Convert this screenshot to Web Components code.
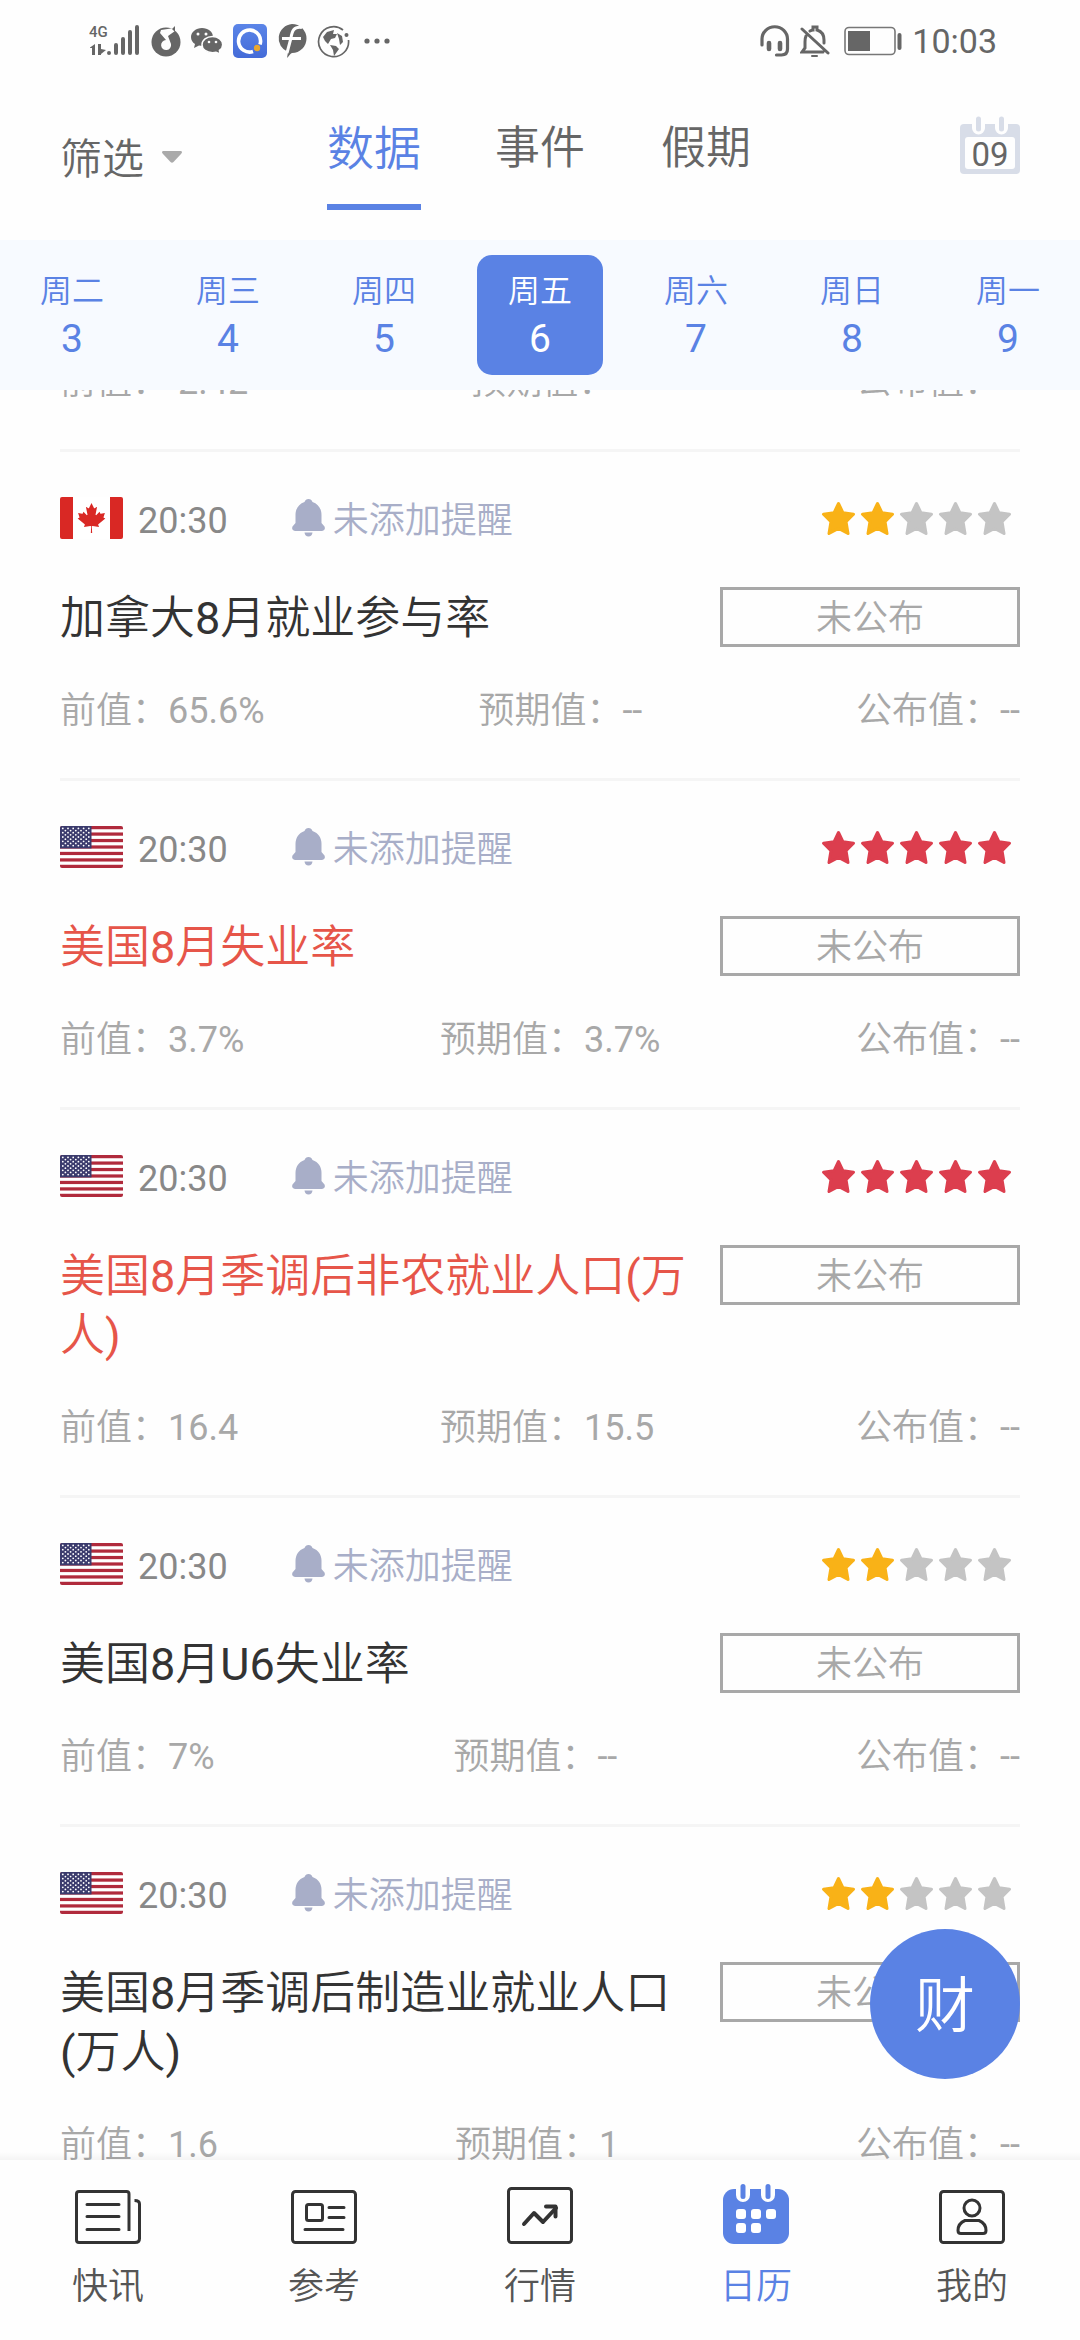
<!DOCTYPE html>
<html lang="zh-CN">
<head>
<meta charset="utf-8">
<meta name="viewport" content="width=device-width, initial-scale=1">
<title>财经日历</title>
<style>
  html, body { margin: 0; height: 100%; }
  body {
    font-family: Roboto, "Noto Sans CJK SC DemiLight", "Noto Sans CJK SC Light", "Noto Sans CJK SC", sans-serif;
    background: #fefefe;
    color: #333;
    --blue: #5a82e4;
    --muted: #a8a8a8;
  }
</style>
</head>
<body>
<calendar-app>
  <status-bar slot="status" time="10:03"></status-bar>
  <app-header slot="header" day="09"></app-header>
  <date-strip slot="dates" selected="6"></date-strip>
  <value-row previous="-2.42" forecast="--" actual="--" class="scrolled"></value-row>
  <event-card flag="ca" time="20:30" stars="2" previous="65.6%" forecast="--" actual="--">加拿大8月就业参与率</event-card>
  <event-card flag="us" time="20:30" stars="5" important previous="3.7%" forecast="3.7%" actual="--">美国8月失业率</event-card>
  <event-card flag="us" time="20:30" stars="5" important previous="16.4" forecast="15.5" actual="--">美国8月季调后非农就业人口(万人)</event-card>
  <event-card flag="us" time="20:30" stars="2" previous="7%" forecast="--" actual="--">美国8月U6失业率</event-card>
  <event-card flag="us" time="20:30" stars="2" previous="1.6" forecast="1" actual="--">美国8月季调后制造业就业人口(万人)</event-card>
  <float-button slot="float">财</float-button>
  <tab-bar slot="nav">
    <tab-item icon="news">快讯</tab-item>
    <tab-item icon="reference">参考</tab-item>
    <tab-item icon="market">行情</tab-item>
    <tab-item icon="calendar" active>日历</tab-item>
    <tab-item icon="profile">我的</tab-item>
  </tab-bar>
</calendar-app>

<script>
const BASE = `
  :host, *, *::before { box-sizing: border-box; }
  button { font: inherit; color: inherit; background: none; border: 0; padding: 0; margin: 0; }
  a { color: inherit; text-decoration: none; }
  svg { display: block; flex: none; }
`;

class Base extends HTMLElement {
  connectedCallback() {
    if (this.shadowRoot) return;
    this.attachShadow({ mode: 'open' }).innerHTML = `<style>${BASE}${this.css()}</style>${this.html()}`;
  }
  attr(name) { return this.getAttribute(name) || ''; }
}

customElements.define('calendar-app', class extends Base {
  css() { return `
    :host { display: flex; flex-direction: column; height: 100vh; min-height: 600px; }
    main { flex: 1; min-height: 0; overflow: hidden; position: relative; }
    main::after { content: ""; position: absolute; left: 0; right: 0; bottom: 0; height: 8px;
      background: linear-gradient(rgba(0,0,0,0), rgba(0,0,0,.04)); }
    ::slotted(.scrolled) { margin: -29px 60px 0; }
    ::slotted(event-card) { margin: 0 60px; }
  `; }
  html() { return `
    <slot name="status"></slot><slot name="header"></slot><slot name="dates"></slot>
    <main><slot></slot><slot name="float"></slot></main>
    <slot name="nav"></slot>`; }
});

customElements.define('status-bar', class extends Base {
  css() { return `
    :host { display: flex; justify-content: space-between; align-items: center; height: 80px; padding: 2px 83px 0 89px; color: #666; flex: none; }
    div { display: flex; align-items: center; }
    .left { gap: 10px; }
    .right { gap: 10px; }
    .more { margin-left: 4px; }
    .battery { margin-left: 4px; }
    time { font-size: 34px; line-height: 40px; }
    text { font: 500 15px Roboto, sans-serif; }
  `; }
  html() { return `
    <div class="left">
      <svg width="52" height="34" viewBox="0 0 52 34" fill="#666">
        <text x="0" y="13">4G</text>
        <path d="M1 23.500l5-3.500v11H3v-7H1zM9 20h3v5l5 1-5 4v1H9z"/>
        <g stroke="#666" stroke-width="4" stroke-linecap="round"><path d="M20 29v.1M27 21v8M34 15v14M41 8v21M48 3v26"/></g>
      </svg>
      <svg width="30" height="32" viewBox="0 0 30 32">
        <circle cx="15" cy="17" r="14.500" fill="#666"/>
        <path d="M10 5l13-2 1 3-7 5 3 8a5 5 0 1 1-5-4L9 8z" fill="#fefefe"/>
        <path d="M21 4l3-3v6z" fill="#666"/>
      </svg>
      <svg width="32" height="28" viewBox="0 0 32 28">
        <path d="M11 1C5 1 0 5 0 10c0 3 1.500 5.500 4 7l-1 4 5-2.500c9 1.500 14-3 14-8.500S17 1 11 1z" fill="#666"/>
        <path d="M21.500 9.500c-6 0-10.500 3.700-10.500 8.200s4.500 8 10.500 8c1.300 0 2.500-.1 3.600-.5L29 27l-.6-3.600c2-1.400 3.300-3.300 3.300-5.700 0-4.500-4.500-8.200-10.200-8.200z" fill="#666" stroke="#fefefe" stroke-width="1.500"/>
        <g fill="#fefefe"><circle cx="7" cy="7" r="1.500"/><circle cx="15" cy="7" r="1.500"/><circle cx="18" cy="15" r="1.300"/><circle cx="25" cy="15" r="1.300"/></g>
      </svg>
      <svg width="34" height="34" viewBox="0 0 34 34">
        <defs><linearGradient id="q" x1="0" y1="0" x2="0" y2="1"><stop stop-color="#5b85e8"/><stop offset="1" stop-color="#446bd8"/></linearGradient></defs>
        <rect width="34" height="34" rx="5" fill="url(#q)"/>
        <path d="M27 20.500A11 11 0 1 0 20 27.500" fill="none" stroke="#fff" stroke-width="3.600"/>
        <circle cx="24" cy="24" r="3.200" fill="#e9a72e"/>
      </svg>
      <svg width="30" height="34" viewBox="0 0 30 34">
        <path d="M15 0a14.500 14.500 0 0 1 0 29c-1 0-3 3-5 5l1-6A14.500 14.500 0 0 1 15 0z" fill="#666"/>
        <path d="M25 3.500C17 2 15 7 14 14L10 29M5 14.500h19" fill="none" stroke="#fefefe" stroke-width="3"/>
      </svg>
      <svg width="33" height="33" viewBox="0 0 33 33">
        <path d="M26 5A15 15 0 1 0 31.500 15" fill="none" stroke="#666" stroke-width="1.700"/>
        <circle cx="29.500" cy="10" r="2" fill="#666"/>
        <path d="M10 7l7-2-1 4 4 0-2 4-4 1-3 5-3-3-2-4zM13 20l6 1 3 3-5 7-1-6zM20 8l5 3 1 6-3 3-1-6z" fill="#666"/>
      </svg>
      <svg class="more" width="26" height="6" viewBox="0 0 26 6" fill="#666"><circle cx="3" cy="3" r="2.600"/><circle cx="13" cy="3" r="2.600"/><circle cx="23" cy="3" r="2.600"/></svg>
    </div>
    <div class="right">
      <svg width="30" height="32" viewBox="0 0 30 32" fill="none" stroke="#666" stroke-linecap="round">
        <path d="M2 20v-6a12.500 12 0 0 1 25.500 0v10q0 6-6 6h-5" stroke-width="3.200"/>
        <path d="M9 18v6M20 18v6" stroke-width="4.600"/>
      </svg>
      <svg width="30" height="32" viewBox="0 0 30 32" fill="none" stroke="#666" stroke-width="3" stroke-linecap="round">
        <path d="M6 11q-1 2-1 6v6l-3 4h21M10 6q2-1 3-1V2h4v3q7 2 7 10v3M2 4l26 24"/>
        <path d="M12 31h5" stroke-width="2"/>
      </svg>
      <svg class="battery" width="58" height="30" viewBox="0 0 58 30">
        <rect x="1" y="1.500" width="50" height="27" rx="4" fill="none" stroke="#777" stroke-width="1.600"/>
        <rect x="4" y="5" width="22" height="20" fill="#666"/>
        <rect x="53.500" y="7" width="4" height="17" rx="2" fill="#666"/>
      </svg>
      <time>${this.attr('time')}</time>
    </div>`; }
});

customElements.define('app-header', class extends Base {
  css() { return `
    :host { display: grid; grid-template-columns: 1fr auto 1fr; height: 160px; padding: 0 60px; color: #666; flex: none; }
    .filter { display: flex; align-items: center; gap: 17px; font-size: 42px; line-height: 60px; height: 60px; margin-top: 50px; justify-self: start; }
    .filter svg { margin-bottom: 6px; }
    .tabs { display: grid; grid-template-columns: repeat(3, 166px); justify-items: center; }
    .tabs button { font-size: 45px; line-height: 64px; height: 130px; padding: 37px 0 23px; border-bottom: 6px solid transparent; }
    .tabs button[aria-selected=true] { font-size: 47px; color: var(--blue); border-color: var(--blue); }
    .day { justify-self: end; display: grid; place-items: center; margin-top: 36px; width: 60px; height: 60px; }
    .day > * { grid-area: 1 / 1; }
    .day span { font-size: 33px; line-height: 36px; margin-top: 18px; }
  `; }
  html() { return `
    <button class="filter">筛选<svg width="22" height="12" viewBox="0 0 22 12"><path d="M2 0h18q2 1 0 3l-7.500 8q-1.500 1.500-3 0L2 3Q0 1 2 0z" fill="#aaa"/></svg></button>
    <div class="tabs" role="tablist">
      <button role="tab" aria-selected="true">数据</button>
      <button role="tab" aria-selected="false">事件</button>
      <button role="tab" aria-selected="false">假期</button>
    </div>
    <button class="day">
      <svg width="60" height="60" viewBox="0 0 60 60">
        <rect y="8" width="60" height="50" rx="4" fill="#d8dde8"/>
        <rect x="5" y="21" width="50" height="32" rx="3" fill="#fefefe"/>
        <path d="M18.500 7v5M41.500 7v5" stroke="#fefefe" stroke-width="13" stroke-linecap="round"/>
        <path d="M18.500 3v10M41.500 3v10" stroke="#d8dde8" stroke-width="5" stroke-linecap="round"/>
      </svg>
      <span>${this.attr('day')}</span>
    </button>`; }
});

customElements.define('date-strip', class extends Base {
  css() { return `
    :host { display: block; background: #f7faff; overflow: hidden; flex: none; color: var(--blue); }
    div { display: grid; grid-template-columns: repeat(7, 1fr); margin: 0 -6px; padding: 15px 0; }
    button { height: 120px; margin: 0 15px; border-radius: 15px; display: flex; flex-direction: column; align-items: center; padding-top: 13px; }
    .on { background: var(--blue); color: #fff; }
    span { font-size: 32px; line-height: 46px; }
    b { font-weight: 400; font-size: 39px; line-height: 50px; }
  `; }
  html() {
    const days = [['周二', 3], ['周三', 4], ['周四', 5], ['周五', 6], ['周六', 7], ['周日', 8], ['周一', 9]];
    return `<div>${days.map(([w, d]) => `<button class="${d == this.attr('selected') ? 'on' : ''}"><span>${w}</span><b>${d}</b></button>`).join('')}</div>`;
  }
});

customElements.define('country-flag', class extends Base {
  css() { return `:host { display: block; width: 63px; height: 42px; border-radius: 2px; overflow: hidden; }`; }
  html() {
    if (this.attr('code') === 'ca') return `
      <svg width="63" height="42" viewBox="0 0 63 42">
        <rect width="63" height="42" fill="#fff"/>
        <path d="M0 0h13v42H0zM50 0h13v42H50z" fill="#d92824"/>
        <path transform="translate(31.500 21) scale(.00744)" fill="#d92824" d="m-90 2030 45-863a95 95 0 0 0-111-98l-859 151 116-320a65 65 0 0 0-20-73l-941-762 212-99a65 65 0 0 0 34-79l-186-572 542 115a65 65 0 0 0 73-38l105-247 423 454a65 65 0 0 0 111-57l-204-1052 327 189a65 65 0 0 0 91-27l332-652 332 652a65 65 0 0 0 91 27l327-189-204 1052a65 65 0 0 0 111 57l423-454 105 247a65 65 0 0 0 73 38l542-115-186 572a65 65 0 0 0 34 79l212 99-941 762a65 65 0 0 0-20 73l116 320-859-151a95 95 0 0 0-111 98l45 863z"/>
      </svg>`;
    let stripes = '', stars = '';
    for (let i = 0; i < 7; i++) stripes += `<rect y="${i * 2}" width="19.500" height="1"/>`;
    for (let r = 0; r < 9; r++) for (let c = 0; c < (r % 2 ? 5 : 6); c++)
      stars += `<circle cx="${2.8 + (r % 2 ? 2.600 : 0) + c * 5.2}" cy="${2.4 + r * 2.15}" r=".9"/>`;
    return `
      <svg width="63" height="42" viewBox="0 0 63 42">
        <rect width="63" height="42" fill="#fff"/>
        <g fill="#b02a3c" transform="scale(3.231)">${stripes}</g>
        <rect width="31.500" height="22.400" fill="#3b3b6d"/>
        <g fill="#fff">${stars}</g>
      </svg>`;
  }
});

customElements.define('star-rating', class extends Base {
  css() { return `
    :host { display: flex; }
    svg { width: 39px; height: 36px; }
  `; }
  html() {
    const n = +this.attr('value');
    const on = n > 3 ? '#dc3e4e' : '#f9b217';
    return Array.from({ length: 5 }, (_, i) => `
      <svg viewBox="0 0 39 36"><path fill="${i < n ? on : '#c4c4c4'}" stroke="${i < n ? on : '#c4c4c4'}" stroke-width="3" stroke-linejoin="round"
        d="M19.500 3.500L24 12.800L34.500 14.200L27 21.600L29 33.500L19.500 28.500L10 33.500L12 21.600L4.500 14.200L15 12.800z"/></svg>`).join('');
  }
});

customElements.define('value-row', class extends Base {
  css() { return `
    :host { display: flex; justify-content: space-between; font-size: 36px; line-height: 42px; color: var(--muted);
      padding-bottom: 46px; border-bottom: 3px solid #f5f5f5; }
  `; }
  html() { return `
    <span>前值：${this.attr('previous')}</span>
    <span>预期值：${this.attr('forecast')}</span>
    <span>公布值：${this.attr('actual')}</span>`; }
});

customElements.define('event-card', class extends Base {
  css() { return `
    :host { display: block; padding-top: 45px; }
    .top { display: flex; align-items: center; height: 42px; }
    time { font-size: 36px; line-height: 42px; color: #888; padding-top: 6px; margin: 0 64px 0 15px; }
    .remind { display: flex; align-items: center; gap: 8px; font-size: 36px; line-height: 42px; color: #a8aec8; }
    .remind span { padding-top: 6px; }
    star-rating { margin: 0 6px 0 auto; }
    .body { display: flex; align-items: flex-start; gap: 15px; padding: 48px 0 42px; }
    h2 { flex: 1; margin: 0; padding-top: 2px; font-size: 45px; font-weight: 400; line-height: 59px; }
    :host([important]) h2 { color: #e65549; }
    .state { width: 300px; height: 60px; border: 3px solid #a8a8a8; color: var(--muted); font-size: 36px; line-height: 58px; text-align: center; }
  `; }
  html() { return `
    <div class="top">
      <country-flag code="${this.attr('flag')}"></country-flag>
      <time>${this.attr('time')}</time>
      <button class="remind">
        <svg width="33" height="38" viewBox="0 0 33 38" fill="#a8aec8"><path d="M16.500 0q3 0 4 3c6 2 9 7 9 13v8l3 3.500q1.500 4-3 4.500h-26q-4.500-.5-3-4.500L3.500 24v-8c0-6 3-11 9-13q1-3 4-3zM12.500 33.500h8q-.5 4-4 4t-4-4z"/></svg>
        <span>未添加提醒</span></button>
      <star-rating value="${this.attr('stars')}"></star-rating>
    </div>
    <div class="body"><h2><slot></slot></h2><div class="state">未公布</div></div>
    <value-row previous="${this.attr('previous')}" forecast="${this.attr('forecast')}" actual="${this.attr('actual')}"></value-row>`; }
});

customElements.define('float-button', class extends Base {
  css() { return `
    :host { position: absolute; right: 60px; bottom: 81px; z-index: 1; }
    button { width: 150px; height: 150px; padding-top: 6px; border-radius: 50%; background: var(--blue); color: #fff; font-size: 60px; line-height: 70px; }
  `; }
  html() { return `<button><slot></slot></button>`; }
});

customElements.define('tab-bar', class extends Base {
  css() { return `
    :host { display: block; flex: none; height: 180px; background: #fefefe; }
    nav { display: grid; grid-template-columns: repeat(5, 1fr); }
  `; }
  html() { return `<nav><slot></slot></nav>`; }
});

const ICONS = {
  news: `<path d="M54 47V10q0-2.500-2.500-2.500H4Q1.500 7.500 1.500 10v46q0 2.500 2.500 2.500h56q4.500 0 4.500-4V20q0-3.500-5-3.500"/><path d="M12 20.500h32M12 32.500h32M12 45.500h32" stroke-linecap="round"/>`,
  reference: `<rect x="1.500" y="7.500" width="63" height="51" rx="3"/><rect x="15.500" y="20.500" width="16" height="16" rx="2"/><path d="M38 23.500h15M38 33.500h15M14 45.500h38" stroke-linecap="round"/>`,
  market: `<rect x="1.500" y="4.500" width="63" height="54" rx="3"/><path d="M17 40l10-11 9 9 13-14" stroke-width="4" stroke-linecap="round" stroke-linejoin="round"/><path d="M39 22.500h9.500v10" stroke-width="4" stroke-linecap="round" stroke-linejoin="round"/>`,
  calendar: `<g stroke="none"><rect y="5" width="66" height="55" rx="11" fill="#5a82e4"/><g fill="#fff"><rect x="13" y="25" width="10" height="10" rx="3"/><rect x="28" y="25" width="10" height="10" rx="3"/><rect x="43" y="25" width="10" height="10" rx="3"/><rect x="13" y="39" width="10" height="10" rx="3"/><rect x="28" y="39" width="10" height="10" rx="3"/></g></g>
    <path d="M20 4v7M45 4v7" stroke="#fefefe" stroke-width="14" stroke-linecap="round"/><path d="M20 2.500v10M45 2.500v10" stroke="#5a82e4" stroke-width="5" stroke-linecap="round"/>`,
  profile: `<rect x="1.500" y="7.500" width="63" height="51" rx="3"/><circle cx="33" cy="24" r="8"/><path d="M26 36.500h14q7 3 7 10 0 3-3 3H22q-3 0-3-3 0-7 7-10z"/>`
};

customElements.define('tab-item', class extends Base {
  css() { return `
    :host { display: block; color: #555; }
    :host([active]) { color: var(--blue); }
    a { display: flex; flex-direction: column; align-items: center; padding-top: 24px; font-size: 36px; line-height: 52px; gap: 17px; }
  `; }
  html() { return `<a href="#"><svg width="66" height="60" viewBox="0 0 66 60" fill="none" stroke="#333" stroke-width="3">${ICONS[this.attr('icon')]}</svg><span><slot></slot></span></a>`; }
});
</script>
</body>
</html>
